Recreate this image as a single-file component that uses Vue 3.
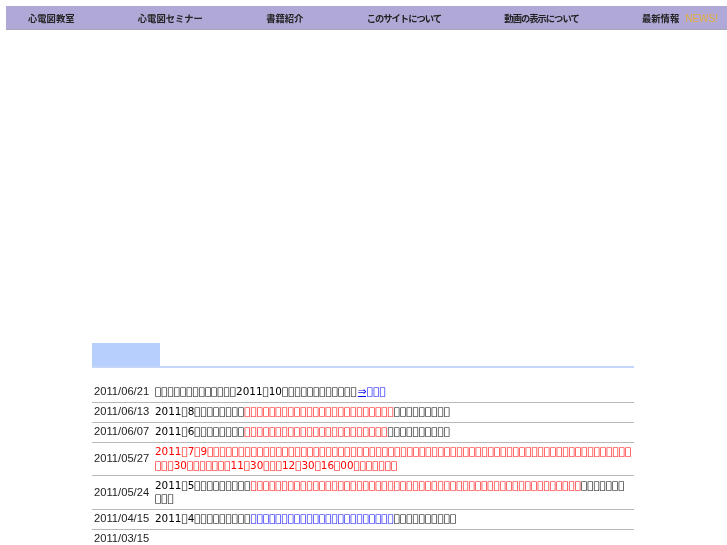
<script setup>
const b = (n) => '\uE000'.repeat(n)
const nav = [
  { t: '心電図教室' },
  { t: '心電図セミナー' },
  { t: '書籍紹介' },
  { t: 'このサイトについて', c: 'tight' },
  { t: '動画の表示について', c: 'tight' }
]
const rows = [
  { date: '2011/06/21', parts: [{ t: b(13) + '2011' + b(1) + '10' + b(12) }, { t: '⇒' + b(3), c: 'link' }] },
  { date: '2011/06/13', parts: [{ t: '2011' + b(1) + '8' + b(8) }, { t: b(24), c: 'red' }, { t: b(9) }] },
  { date: '2011/06/07', parts: [{ t: '2011' + b(1) + '6' + b(8) }, { t: b(23), c: 'red' }, { t: b(10) }] },
  { date: '2011/05/27', parts: [{ t: '2011' + b(1) + '7' + b(1) + '9' + b(68) + '\n' + b(3) + '30' + b(7) + '11' + b(1) + '30' + b(3) + '12' + b(1) + '30' + b(1) + '16' + b(1) + '00' + b(7), c: 'red' }] },
  { date: '2011/05/24', parts: [{ t: '2011' + b(1) + '5' + b(9) }, { t: b(53), c: 'red' }, { t: b(7) + '\n' + b(3) }] },
  { date: '2011/04/15', parts: [{ t: '2011' + b(1) + '4' + b(9) }, { t: b(23), c: 'blue' }, { t: b(10) }] },
  { date: '2011/03/15', parts: [] }
]
</script>

<template>
  <div class="page">
    <nav class="nav">
      <span v-for="n in nav" :key="n.t" class="item" :class="n.c">{{ n.t }}</span>
      <span class="item">最新情報<span class="news">NEWS!</span></span>
    </nav>
    <section class="info">
      <div class="head"><div class="tab"></div></div>
      <div class="list">
        <div v-for="r in rows" :key="r.date" class="row">
          <div class="date">{{ r.date }}</div>
          <div class="text"><span v-for="(p, i) in r.parts" :key="i" :class="p.c">{{ p.t }}</span></div>
        </div>
      </div>
    </section>
  </div>
</template>

<style>
html, body { margin: 0; background: #fff; overflow: hidden; }
</style>

<style scoped>
.page { width: 727px; height: 545px; overflow: hidden; padding-top: 6px; box-sizing: border-box; }
.nav {
  margin-left: 6px; height: 23px; background: #b0a8d6; border-bottom: 1px solid #a5a5b5;
  display: flex; align-items: center; justify-content: space-between; padding: 0 9px 0 22px;
  font: 700 9.3px "Noto Sans CJK JP", sans-serif; color: #222;
}
.item { filter: blur(0.35px); white-space: nowrap; }
.tight { letter-spacing: -1px; }
.news { margin-left: 6px; color: #e8b040; font-family: "Liberation Sans", sans-serif; font-size: 10px; font-weight: 400; }
.info { margin: 313px 0 0 92px; width: 542px; }
.head { height: 23px; border-bottom: 2px solid #c4d6fa; }
.tab { width: 68px; height: 23px; background: #b7cffd; }
.list { padding-top: 14.75px; font: 11.2px/13.5px "Liberation Sans", sans-serif; color: #222; transform: translateZ(0); }
.row { display: flex; align-items: center; border-bottom: 1px solid #b8b8b8; padding: 2.5px 0 3px; min-height: 13.5px; }
.date { width: 63px; flex: none; padding-left: 2px; box-sizing: border-box; }
.text { flex: 1; font-family: "DejaVu Sans", sans-serif; font-size: 10.4px; line-height: 13.5px; white-space: pre-wrap; word-break: break-all; color: #000; }
.red { color: #f00; }
.blue { color: #00f; }
.link { color: #00f; text-decoration: underline; padding-left: 1px; letter-spacing: 0.2px; }
</style>
